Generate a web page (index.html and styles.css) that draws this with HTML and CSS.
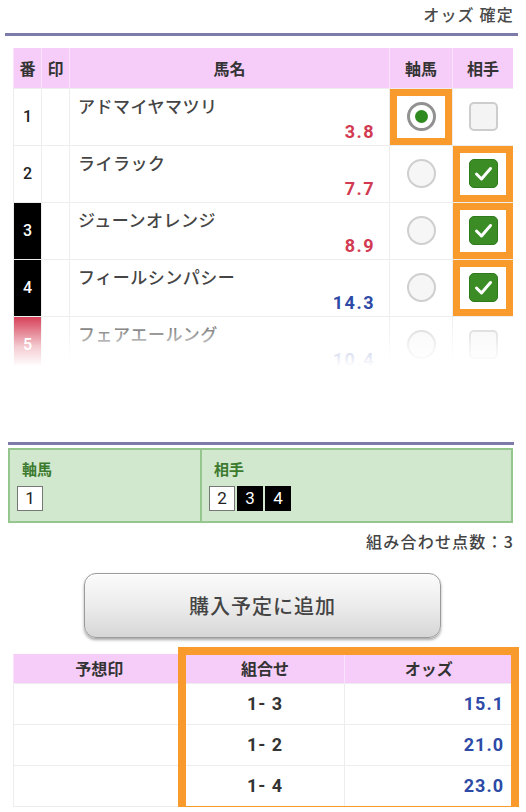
FILE: index.html
```html
<!DOCTYPE html>
<html lang="ja">
<head>
<meta charset="utf-8">
<title>オッズ</title>
<link rel="stylesheet" href="styles.css">
</head>
<body>
<div class="top-bar">オッズ 確定</div>
<div class="rule rule-top"></div>

<div class="race-wrap">
  <table class="race">
    <colgroup>
      <col class="c-num"><col class="c-mark"><col class="c-name"><col class="c-axis"><col class="c-pair">
    </colgroup>
    <thead>
      <tr><th>番</th><th>印</th><th>馬名</th><th>軸馬</th><th>相手</th></tr>
    </thead>
    <tbody>
      <tr>
        <td class="num">1</td><td></td>
        <td class="name"><div class="horse">アドマイヤマツリ</div><div class="odds red">3.8</div></td>
        <td class="sel hl"><span class="radio on"></span></td>
        <td class="sel"><span class="check"></span></td>
      </tr>
      <tr>
        <td class="num">2</td><td></td>
        <td class="name"><div class="horse">ライラック</div><div class="odds red">7.7</div></td>
        <td class="sel"><span class="radio"></span></td>
        <td class="sel hl"><span class="check on"><svg viewBox="0 0 29 29" width="29" height="29"><polyline points="7.5,15 12.5,20 21.5,9.5" fill="none" stroke="#fff" stroke-width="3" stroke-linecap="round" stroke-linejoin="round"/></svg></span></td>
      </tr>
      <tr>
        <td class="num black">3</td><td></td>
        <td class="name"><div class="horse">ジューンオレンジ</div><div class="odds red">8.9</div></td>
        <td class="sel"><span class="radio"></span></td>
        <td class="sel hl"><span class="check on"><svg viewBox="0 0 29 29" width="29" height="29"><polyline points="7.5,15 12.5,20 21.5,9.5" fill="none" stroke="#fff" stroke-width="3" stroke-linecap="round" stroke-linejoin="round"/></svg></span></td>
      </tr>
      <tr>
        <td class="num black">4</td><td></td>
        <td class="name"><div class="horse">フィールシンパシー</div><div class="odds blue">14.3</div></td>
        <td class="sel"><span class="radio"></span></td>
        <td class="sel hl"><span class="check on"><svg viewBox="0 0 29 29" width="29" height="29"><polyline points="7.5,15 12.5,20 21.5,9.5" fill="none" stroke="#fff" stroke-width="3" stroke-linecap="round" stroke-linejoin="round"/></svg></span></td>
      </tr>
      <tr>
        <td class="num redbg">5</td><td></td>
        <td class="name"><div class="horse">フェアエールング</div><div class="odds blue">10.4</div></td>
        <td class="sel"><span class="radio"></span></td>
        <td class="sel"><span class="check"></span></td>
      </tr>
    </tbody>
  </table>
  <div class="fade"></div>
</div>

<div class="rule rule-sum"></div>
<div class="summary">
  <div class="sum-cell axis">
    <div class="sum-label">軸馬</div>
    <div class="chips"><span class="chip">1</span></div>
  </div>
  <div class="sum-cell">
    <div class="sum-label">相手</div>
    <div class="chips"><span class="chip">2</span><span class="chip dark">3</span><span class="chip dark">4</span></div>
  </div>
</div>
<div class="count">組み合わせ点数：3</div>

<div class="btn-row"><button class="add-btn">購入予定に追加</button></div>

<div class="picks">
  <table class="pick-left">
    <thead><tr><th>予想印</th></tr></thead>
    <tbody><tr><td></td></tr><tr><td></td></tr><tr><td></td></tr></tbody>
  </table>
  <div class="pick-group">
    <table class="pick-right">
      <colgroup><col class="c-combo"><col class="c-odds"></colgroup>
      <thead><tr><th>組合せ</th><th>オッズ</th></tr></thead>
      <tbody>
        <tr><td class="combo">1- 3</td><td class="podds">15.1</td></tr>
        <tr><td class="combo">1- 2</td><td class="podds">21.0</td></tr>
        <tr><td class="combo">1- 4</td><td class="podds">23.0</td></tr>
      </tbody>
    </table>
  </div>
</div>
</body>
</html>
```

FILE: styles.css
```css
* { box-sizing: border-box; }
html, body { margin: 0; padding: 0; background: #fff; }
body {
  width: 526px;
  font-family: "Noto Sans CJK JP", "Noto Sans", sans-serif;
  color: #444;
}

.top-bar {
  height: 33px;
  line-height: 28px;
  font-size: 16px;
  font-weight: 500;
  text-align: right;
  padding-right: 12px;
  color: #4a4a4a;
  letter-spacing: 1.2px;
}

.rule { height: 3px; background: #7c7ba9; }
.rule-top { margin: 0 8px 0 5px; }
.rule-sum { margin: 70px 12px 0 8px; }

/* race table */
.race-wrap {
  position: relative;
  margin: 12px 13px 0 13px;
  height: 324px;
  overflow: hidden;
}
.race {
  width: 500px;
  border-collapse: collapse;
  table-layout: fixed;
}
.c-num { width: 28px; }
.c-mark { width: 28px; }
.c-name { width: 320px; }
.c-axis { width: 63px; }
.c-pair { width: 61px; }

.race th {
  height: 40px;
  background: #f6cdf8;
  font-size: 16px;
  font-weight: bold;
  color: #333;
  border-left: 1px solid #f9e3fa;
  border-right: 1px solid #f9e3fa;
  padding: 0;
}
.race td {
  height: 57px;
  border: 1px solid #ededed;
  padding: 0;
  vertical-align: middle;
}
.num {
  text-align: center;
  font-family: "Roboto", "Noto Sans", sans-serif;
  font-weight: 500;
  font-size: 16px;
  color: #222;
}
.num.black { background: #000; color: #fff; }
.num.redbg { background: #d3324b; color: #fff; }

.name { vertical-align: top !important; padding: 6px 14px 0 8px !important; }
.horse {
  font-size: 17px;
  font-weight: 500;
  line-height: 22px;
  color: #454545;
  letter-spacing: 0.5px;
}
.odds {
  text-align: right;
  font-family: "Roboto", "Noto Sans", sans-serif;
  font-weight: bold;
  font-size: 18px;
  letter-spacing: 1.5px;
  line-height: 22px;
  margin-top: 4px;
}
.odds.red { color: #d23a52; }
.odds.blue { color: #2c4aa6; }

.sel { text-align: center; }
.sel.hl { box-shadow: inset 0 0 0 7px #f99b2c; }

.radio {
  display: inline-flex;
  align-items: center;
  justify-content: center;
  width: 29px;
  height: 29px;
  border-radius: 50%;
  border: 2px solid #cfcfcf;
  background: #f6f6f6;
  vertical-align: middle;
}
.radio.on { border: 3px solid #919191; background: #fff; }
.radio.on::after {
  content: "";
  width: 13px;
  height: 13px;
  border-radius: 50%;
  background: #2e8a1e;
}

.check {
  display: inline-block;
  width: 29px;
  height: 29px;
  border-radius: 5px;
  border: 2px solid #cdcdcd;
  background: #f4f4f4;
  vertical-align: middle;
}
.check.on { border: 1px solid #2f7a1c; background: #3b8c25; }
.check svg { display: block; margin: -1px; }

.fade {
  position: absolute;
  left: 0;
  right: 0;
  bottom: 0;
  height: 56px;
  background: linear-gradient(rgba(255,255,255,0.05), rgba(255,255,255,0.75) 55%, #fff 90%);
}

/* summary */
.summary {
  display: flex;
  margin: 3px 13px 0 8px;
  height: 75px;
  border: 2px solid #94c68e;
  background: #d1e8cf;
}
.sum-cell { padding: 8px 0 0 7px; flex: 1; }
.sum-cell.axis { flex: 0 0 192px; border-right: 2px solid #94c68e; }
.sum-label {
  font-size: 15px;
  font-weight: bold;
  color: #3c7a2d;
  line-height: 22px;
  padding-left: 5px;
}
.chips { display: flex; gap: 2px; margin-top: 6px; }
.chip {
  width: 26px;
  height: 25px;
  border: 1.5px solid #777;
  background: #fff;
  color: #222;
  font-family: "Roboto", "Noto Sans", sans-serif;
  font-size: 17px;
  line-height: 22px;
  text-align: center;
}
.chip.dark { background: #000; border-color: #000; color: #fff; }

.count {
  text-align: right;
  padding-right: 12px;
  font-size: 16px;
  font-weight: 500;
  line-height: 24px;
  margin-top: 6px;
  color: #444;
  letter-spacing: 1.2px;
}

.btn-row { padding: 20px 0 0 84px; }
.add-btn {
  display: block;
  width: 357px;
  height: 65px;
  border-radius: 12px;
  border: 1px solid #9b9b9b;
  background: linear-gradient(#fbfbfb, #ececec 50%, #d6d6d6);
  box-shadow: 0 2px 3px rgba(0,0,0,0.35), inset 0 1px 0 #fff;
  font-family: "Noto Sans CJK JP", sans-serif;
  font-size: 20px;
  font-weight: 500;
  color: #444;
  letter-spacing: 1px;
  padding: 0;
}

/* picks */
.picks {
  display: flex;
  margin: 16px 0 0 13px;
  width: 499px;
}
.pick-left { width: 172px; border-collapse: collapse; }
.pick-group {
  width: 327px;
  outline: 8px solid #f99b2c;
  outline-offset: -1px;
  position: relative;
}
.pick-right { width: 327px; border-collapse: collapse; table-layout: fixed; }
.c-combo { width: 159px; }
.c-odds { width: 168px; }
.picks th {
  height: 29px;
  background: #f6cdf8;
  font-size: 16px;
  font-weight: bold;
  color: #333;
  padding: 0;
  border-left: 1px solid #f9e3fa;
}
.picks td {
  height: 41px;
  border: 1px solid #ededed;
  padding: 0;
}
.combo {
  text-align: center;
  font-family: "Roboto", "Noto Sans", sans-serif;
  font-weight: bold;
  font-size: 18px;
  color: #333;
  letter-spacing: 1px;
}
.podds {
  text-align: right;
  padding-right: 8px !important;
  font-family: "Roboto", "Noto Sans", sans-serif;
  font-weight: bold;
  font-size: 18px;
  color: #2c4aa6;
  letter-spacing: 1px;
}
```
